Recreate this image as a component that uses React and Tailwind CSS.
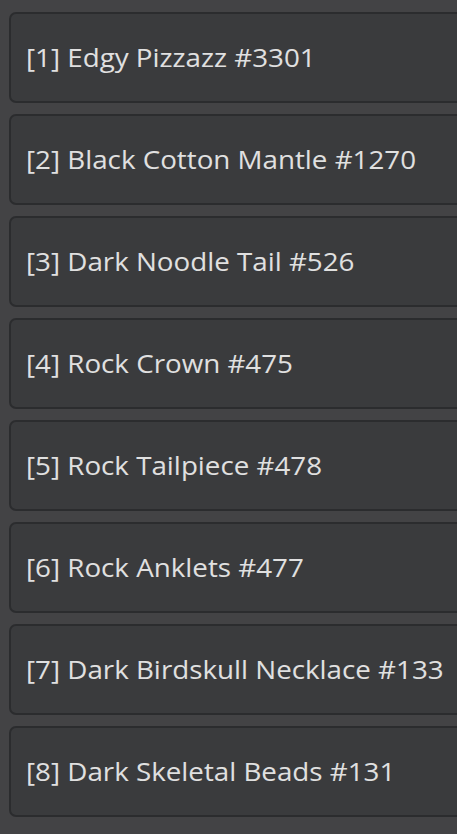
import React from 'react';

const items = [
  { id: 1, name: 'Edgy Pizzazz', num: 3301 },
  { id: 2, name: 'Black Cotton Mantle', num: 1270 },
  { id: 3, name: 'Dark Noodle Tail', num: 526 },
  { id: 4, name: 'Rock Crown', num: 475 },
  { id: 5, name: 'Rock Tailpiece', num: 478 },
  { id: 6, name: 'Rock Anklets', num: 477 },
  { id: 7, name: 'Dark Birdskull Necklace', num: 133 },
  { id: 8, name: 'Dark Skeletal Beads', num: 131 },
];

export default function App() {
  return (
    <div className="min-h-[834px] w-full overflow-hidden bg-[#434345] pl-[9px] pt-[12px] font-['Open_Sans',sans-serif]">
      <div className="flex flex-col gap-[11px] mr-[-12px]">
        {items.map(item => (
          <div
            key={item.id}
            className="h-[91px] flex items-center rounded-[7px] border-2 border-[#2b2c2e] bg-[#3a3b3d] pl-[15px]"
          >
            {/* glyphs are drawn a little wide */}
            <span className="text-[25px] text-[#e0e0e0] whitespace-nowrap origin-left scale-x-[1.11]">
              [{item.id}] {item.name} #{item.num}
            </span>
          </div>
        ))}
      </div>
    </div>
  );
}
